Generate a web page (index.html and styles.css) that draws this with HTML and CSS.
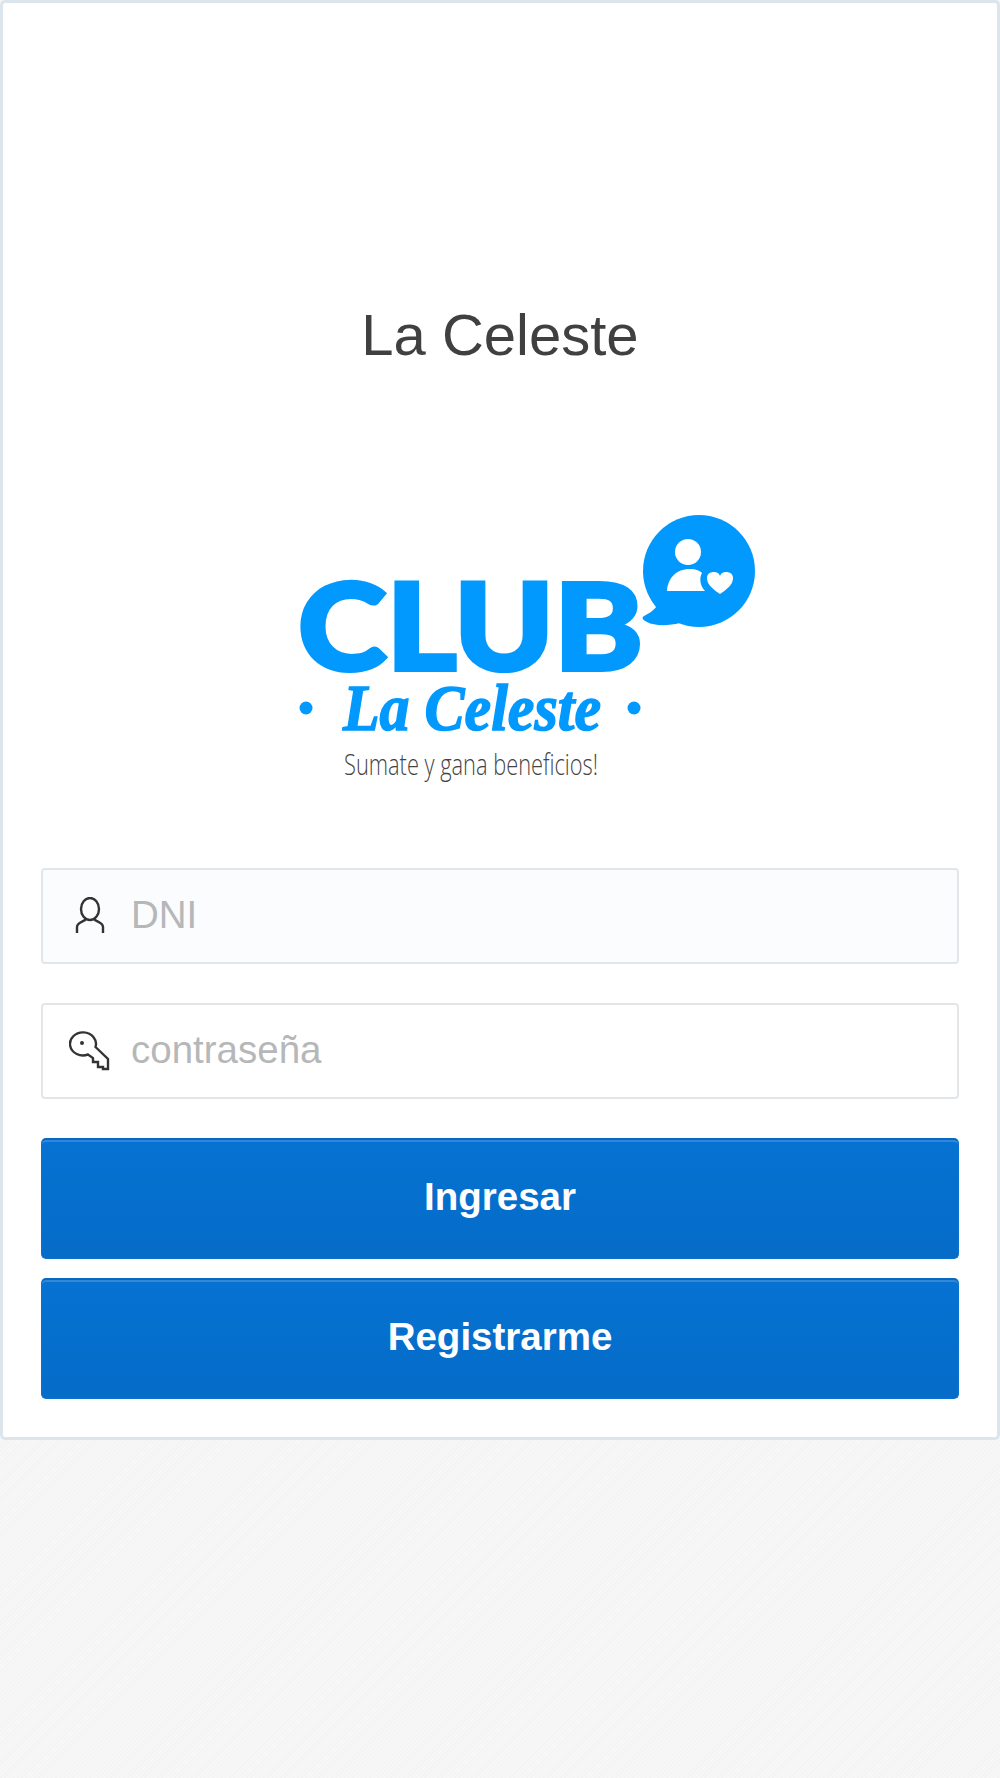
FILE: index.html
```html
<!DOCTYPE html>
<html>
<head>
    <meta charset="utf-8">
    <title>La Celeste</title>
    <link rel="stylesheet" href="styles.css">
</head>
<body>
    <div class="login-box">
        <h1 class="login-title">La Celeste</h1>

        <div class="logo-wrap">
            <svg class="logo" viewBox="0 0 460 300" width="460" height="300">
                <!-- speech bubble -->
                <circle cx="429" cy="81" r="56" fill="#0299fe"/>
                <path d="M387 116 C383 121 378 124 374 126 C371 128 373 130 377 132 C384 136 398 136 410 133 L420 120 Z" fill="#0299fe"/>
                <circle cx="418" cy="62" r="13" fill="#fff"/>
                <path d="M397 101 C398 88 406 79 420 79 C426 79 430 81 432 83 C429 88 430 96 435 101 Z" fill="#fff"/>
                <path d="M450 104 C443 99 437 95 437 88 C437 84 440 82 444 82 C447 82 449 83 450 86 C451 83 453 82 456 82 C460 82 463 84 463 88 C463 95 457 99 450 104 Z" fill="#fff"/>
                <!-- wordmark -->
                <text class="logo-club" x="28" y="180" textLength="345" lengthAdjust="spacingAndGlyphs">CLUB</text>
                <circle cx="36" cy="218" r="6.5" fill="#0299fe"/>
                <circle cx="364" cy="218" r="6.5" fill="#0299fe"/>
                <text class="logo-script" x="73" y="240" textLength="258" lengthAdjust="spacingAndGlyphs">La Celeste</text>
                <text class="logo-tag" x="74" y="285" textLength="254" lengthAdjust="spacingAndGlyphs">Sumate y gana beneficios!</text>
            </svg>
        </div>

        <form class="login-form">
            <div class="field field-active">
                <span class="field-slot">
                    <svg class="field-icon" viewBox="0 0 32 38" width="32" height="38">
                        <ellipse cx="16" cy="12" rx="9" ry="11"/>
                        <path d="M12 22 C10 25 3 25 3 30 V36 M20 22 C22 25 29 25 29 30 V36"/>
                    </svg>
                </span>
                <input class="field-input" type="text" placeholder="DNI">
            </div>
            <div class="field">
                <span class="field-slot">
                    <svg class="field-icon" viewBox="0 0 41 41" width="41" height="41">
                        <path d="M26.5 16 L39 28 V38 H34 V36 H29 V31 H24 V27 L19 23.5 A13 11.5 0 1 1 26.5 16 Z"/>
                        <circle class="key-hole" cx="13" cy="12" r="2"/>
                    </svg>
                </span>
                <input class="field-input" type="password" placeholder="contraseña">
            </div>
            <button class="btn" type="button">Ingresar</button>
            <button class="btn" type="button">Registrarme</button>
        </form>
    </div>
</body>
</html>
```
FILE: styles.css
```css
html, body {
    margin: 0;
    padding: 0;
}

body {
    height: 1778px;
    font-family: "Liberation Sans", Arial, sans-serif;
    background-color: #f5f5f5;
    background-image: repeating-linear-gradient(135deg, #f3f3f3 0, #f3f3f3 1px, #f7f7f7 1px, #f7f7f7 3px);
}

.login-box {
    box-sizing: border-box;
    height: 1440px;
    padding: 0 38px;
    background: #fff;
    border: 3px solid #dde5ec;
    border-radius: 5px;
}

.login-title {
    margin: 0;
    padding-top: 297px;
    font-size: 58px;
    line-height: 70px;
    font-weight: normal;
    text-align: center;
    color: #404040;
}

.logo-wrap {
    display: flex;
    justify-content: center;
    padding-top: 120px;
}

.logo {
    display: block;
    overflow: visible;
}

.logo-club {
    font-family: "Lato", sans-serif;
    font-size: 120px;
    font-weight: 900;
    fill: #0299fe;
    stroke: #0299fe;
    stroke-width: 4;
}

.logo-script {
    font-family: "Liberation Serif", serif;
    font-size: 66px;
    font-style: italic;
    font-weight: bold;
    fill: #0299fe;
    stroke: #0299fe;
    stroke-width: 1.5;
}

.logo-tag {
    font-family: "Open Sans", sans-serif;
    font-size: 30px;
    font-weight: 300;
    fill: #444;
}

.login-form {
    display: flex;
    flex-direction: column;
    padding-top: 78px;
}

.field {
    display: flex;
    align-items: center;
    box-sizing: border-box;
    height: 96px;
    margin-bottom: 39px;
    padding-left: 26px;
    background: #fff;
    border: 2px solid #e2e6e9;
    border-radius: 4px;
}

.field-active {
    background: #fbfcfe;
}

.field-slot {
    display: flex;
    justify-content: center;
    flex: none;
    width: 41px;
}

.field-icon {
    display: block;
    fill: none;
    stroke: #333;
    stroke-width: 2.4;
}

.field-icon .key-hole {
    fill: #333;
    stroke: none;
}

.field-input {
    flex: 1;
    min-width: 0;
    margin-left: 21px;
    padding: 0 0 3px;
    border: none;
    outline: none;
    background: transparent;
    font-family: "Liberation Sans", Arial, sans-serif;
    font-size: 38.5px;
    color: #333;
}

.field-input::placeholder {
    color: #b5b7b8;
    opacity: 1;
}

.btn {
    height: 121px;
    margin-bottom: 19px;
    padding: 0 0 5px;
    background: linear-gradient(#0672d2, #056cc8);
    border: 1px solid #0a72cf;
    border-top: 2px solid #0568c2;
    border-radius: 5px;
    box-shadow: inset 0 2px 0 #3486d8;
    font-family: "Liberation Sans", Arial, sans-serif;
    font-size: 38.5px;
    font-weight: bold;
    color: #fff;
}
```
